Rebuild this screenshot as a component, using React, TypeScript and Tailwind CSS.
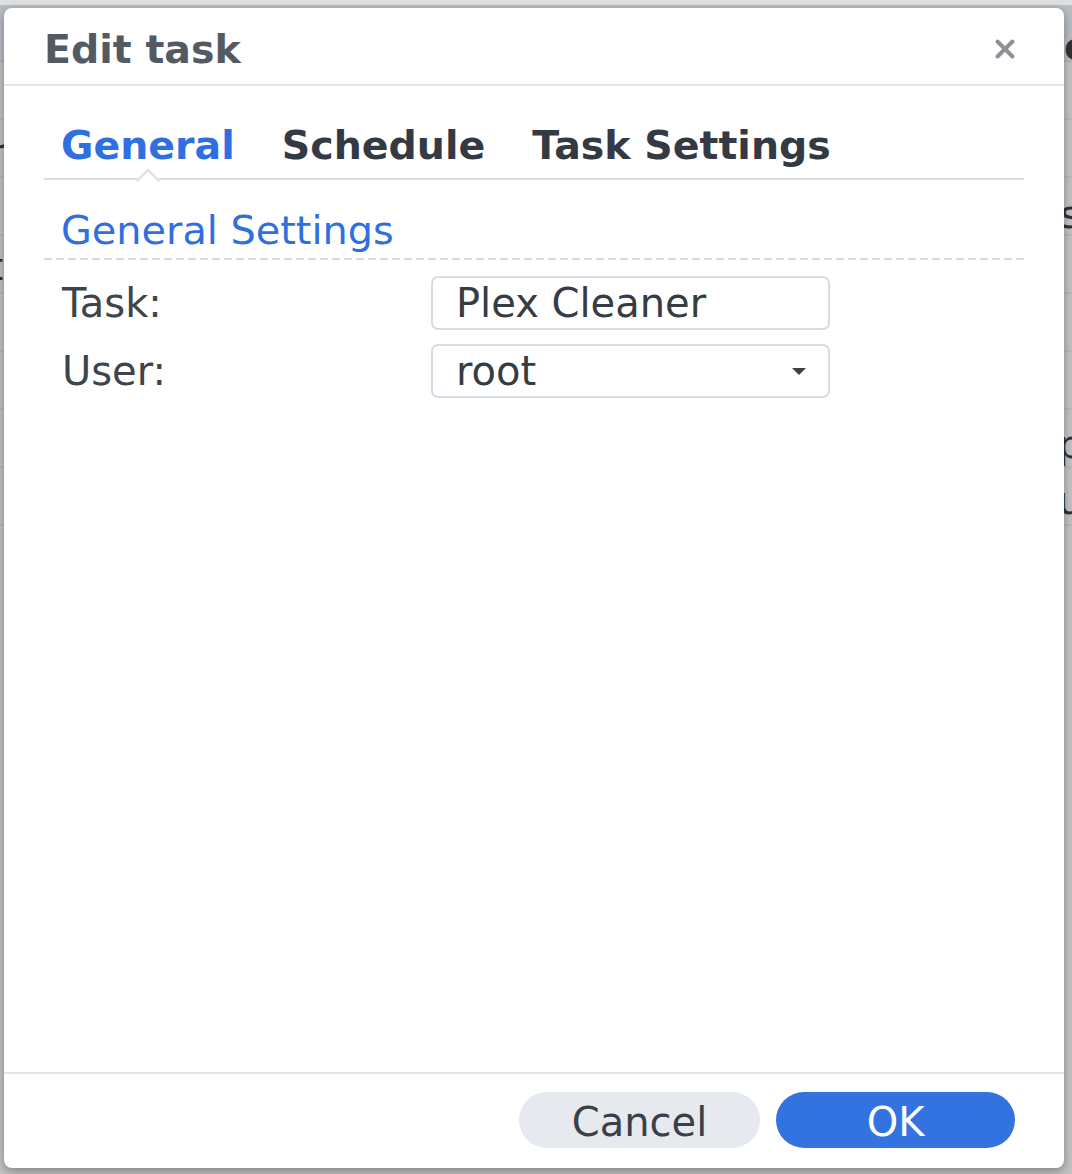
import { X } from "lucide-react"

const font = { fontFamily: '"DejaVu Sans", Verdana, sans-serif' }

function Backdrop() {
  // dimmed table behind the modal
  const rows = [0, 1, 2, 3, 4, 5, 6, 7]
  return (
    <div className="absolute inset-0 flex flex-col bg-[#c3c3c3]">
      <div className="h-[5px] bg-[#dedfe1]" />
      <div className="h-[57px] bg-[#b9bdc4] border-b-2 border-[#b0b4bb]" />
      {rows.map((r) => (
        <div key={r} className="h-[58px] border-b-2 border-[#b5b9c0]" />
      ))}
    </div>
  )
}

function Field({ label, value, select }: { label: string; value: string; select?: boolean }) {
  return (
    <div className="flex items-center">
      <div className="w-[387px] pl-[18px] text-[40px] leading-[54px] text-[#3e444c]">{label}</div>
      <div className="relative flex items-center w-[399px] h-[54px] rounded-[7px] border-2 border-[#d6dce4] pl-[23px] text-[40px] leading-[48px] text-[#363c45]">
        {value}
        {select && (
          <div className="absolute right-[22px] top-[22px] w-0 h-0 border-l-[7px] border-r-[7px] border-t-[7px] border-l-transparent border-r-transparent border-t-[#3b414a]" />
        )}
      </div>
    </div>
  )
}

export default function App() {
  return (
    <div className="relative w-[1072px] h-[1174px] overflow-hidden" style={font}>
      <Backdrop />

      {/* bits of the page peeking out */}
      <span className="absolute left-[1064px] top-[18px] text-[39px] font-bold text-[#2d323a]">e</span>
      <span className="absolute left-[1060px] top-[186px] text-[39px] text-[#2d323a]">s</span>
      <span className="absolute left-[1058px] top-[416px] text-[39px] text-[#2d323a]">p</span>
      <span className="absolute left-[1058px] top-[472px] text-[39px] text-[#2d323a]">u</span>
      <span className="absolute left-[-12px] top-[238px] text-[39px] text-[#2d323a]">t</span>
      <span className="absolute left-[-10px] top-[124px] text-[39px] text-[#2d323a]">r</span>

      {/* Modal */}
      <div className="absolute left-[4px] top-[8px] w-[1060px] h-[1160px] flex flex-col bg-white rounded-[8px] shadow-[0_3px_10px_rgba(0,0,0,0.35)]">
        {/* Header */}
        <div className="h-[78px] flex items-center justify-between pl-[40px] pr-[44px] pt-[6px] border-b-2 border-[#e2e7ef]">
          <h1 className="text-[39.5px] leading-[48px] font-bold text-[#545a61]">Edit task</h1>
          <X className="w-[30px] h-[30px] text-[#8d9198]" strokeWidth={3.2} />
        </div>

        {/* Body */}
        <div className="flex-1 px-[40px]">
          <div className="h-[94px] flex items-end gap-[47px] pl-[17px] pb-[10px] border-b-2 border-[#d8dee7]">
            <div className="relative text-[39.5px] leading-[45px] font-bold text-[#2f6fe0]">
              General
              <div className="absolute left-1/2 bottom-[-21px] -translate-x-1/2 w-[17px] h-[17px] rotate-45 bg-white border-l-2 border-t-2 border-[#d8dee7]" />
            </div>
            <div className="text-[39.5px] leading-[45px] font-bold text-[#343a43]">Schedule</div>
            <div className="text-[39.5px] leading-[45px] font-bold text-[#343a43]">Task Settings</div>
          </div>

          <div className="pt-[28px] pb-[5px] pl-[17px] text-[39.8px] leading-[45px] text-[#2f6fe0]">General Settings</div>
          <div className="h-[2px] bg-[repeating-linear-gradient(90deg,#d5dbe4_0_8px,transparent_8px_12px)]" />

          <div className="flex flex-col gap-[14px] pt-[16px]">
            <Field label="Task:" value="Plex Cleaner" />
            <Field label="User:" value="root" select />
          </div>
        </div>

        {/* Footer */}
        <div className="h-[96px] flex items-start justify-end gap-[16px] pt-[18px] pr-[49px] border-t-2 border-[#e2e7ef]">
          <button className="w-[241px] h-[56px] rounded-full bg-[#e6eaee] text-[40px] text-[#3a4049]">Cancel</button>
          <button className="w-[239px] h-[56px] rounded-full bg-[#3273e0] text-[40px] text-white">OK</button>
        </div>
      </div>
    </div>
  )
}
